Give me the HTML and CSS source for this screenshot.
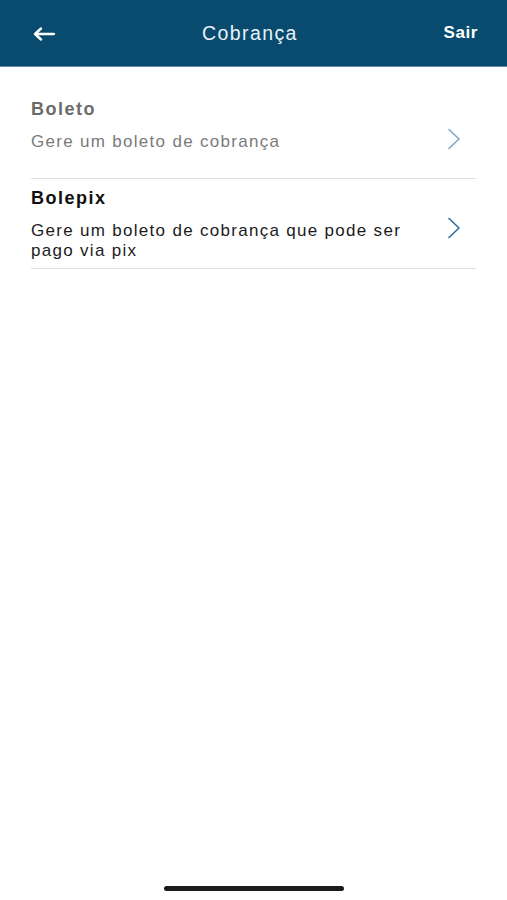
FILE: index.html
```html
<!DOCTYPE html>
<html>
<head>
    <meta charset="utf-8">
    <title>Cobrança</title>
    <link rel="stylesheet" href="styles.css">
</head>
<body>
    <div class="screen">
        <div class="topbar">
            <span class="back-button">
                <svg width="22" height="14" viewBox="0 0 22 14">
                    <path d="M21 7H2.5M8 1.5L2 7l6 5.5" fill="none" stroke="#ffffff" stroke-width="2.4" stroke-linecap="round" stroke-linejoin="round"/>
                </svg>
            </span>
            <span class="topbar-title">Cobrança</span>
            <span class="logout">Sair</span>
        </div>

        <div class="menu-list">
            <div class="menu-item disabled">
                <div class="item-title">Boleto</div>
                <div class="item-row">
                    <div class="item-desc">Gere um boleto de cobrança</div>
                    <svg class="chevron" width="14" height="22" viewBox="0 0 14 22">
                        <polyline points="2,1.5 12,11 2,20.5" fill="none" stroke-width="1.6" stroke-linecap="round" stroke-linejoin="round"/>
                    </svg>
                </div>
            </div>
            <div class="menu-item">
                <div class="item-title">Bolepix</div>
                <div class="item-row">
                    <div class="item-desc">Gere um boleto de cobrança que pode ser pago via pix</div>
                    <svg class="chevron" width="14" height="22" viewBox="0 0 14 22">
                        <polyline points="2,1.5 12,11 2,20.5" fill="none" stroke-width="1.6" stroke-linecap="round" stroke-linejoin="round"/>
                    </svg>
                </div>
            </div>
        </div>

        <div class="home-indicator"></div>
    </div>
</body>
</html>
```

FILE: styles.css
```css
body {
    margin: 0;
    background-color: #ffffff;
    font-family: "Liberation Sans", Arial, sans-serif;
}
.screen {
    display: flex;
    flex-direction: column;
    min-height: 100vh;
}
.topbar {
    display: flex;
    align-items: center;
    justify-content: space-between;
    height: 66px;
    padding: 0 29px 0 33px;
    background-color: #084b6f;
    border-bottom: 1px solid #5f8aa3;
    color: #ffffff;
}
.back-button {
    display: flex;
    width: 70px;
    padding-top: 1px;
}
.topbar-title {
    font-size: 19.5px;
    letter-spacing: 1.4px;
    color: #e8f2f8;
}
.logout {
    width: 81px;
    text-align: right;
    font-size: 17px;
    font-weight: bold;
    letter-spacing: 0.6px;
}
.menu-list {
    padding: 23px 31px 0 31px;
}
.menu-item {
    box-sizing: border-box;
    min-height: 89px;
    padding: 8px 0 7px 0;
    border-bottom: 1px solid #dedede;
}
.item-title {
    font-size: 18px;
    line-height: 22px;
    font-weight: bold;
    letter-spacing: 1.5px;
    color: #111111;
}
.item-row {
    display: flex;
    align-items: flex-start;
    justify-content: space-between;
    margin-top: 12px;
}
.item-desc {
    font-size: 17px;
    line-height: 20px;
    letter-spacing: 1.3px;
    color: #1c1c1c;
    max-width: 385px;
}
.chevron {
    flex-shrink: 0;
    margin: -4px 15px 0 0;
    stroke: #2f6d9e;
}
.menu-item.disabled .item-title {
    color: #6b6b6b;
}
.menu-item.disabled .item-desc {
    color: #7a7a7a;
}
.menu-item.disabled .chevron {
    stroke: #7ea6c8;
}
.home-indicator {
    width: 180px;
    height: 5px;
    margin: auto auto 9px auto;
    border-radius: 3px;
    background-color: #1b1b1b;
}
```
